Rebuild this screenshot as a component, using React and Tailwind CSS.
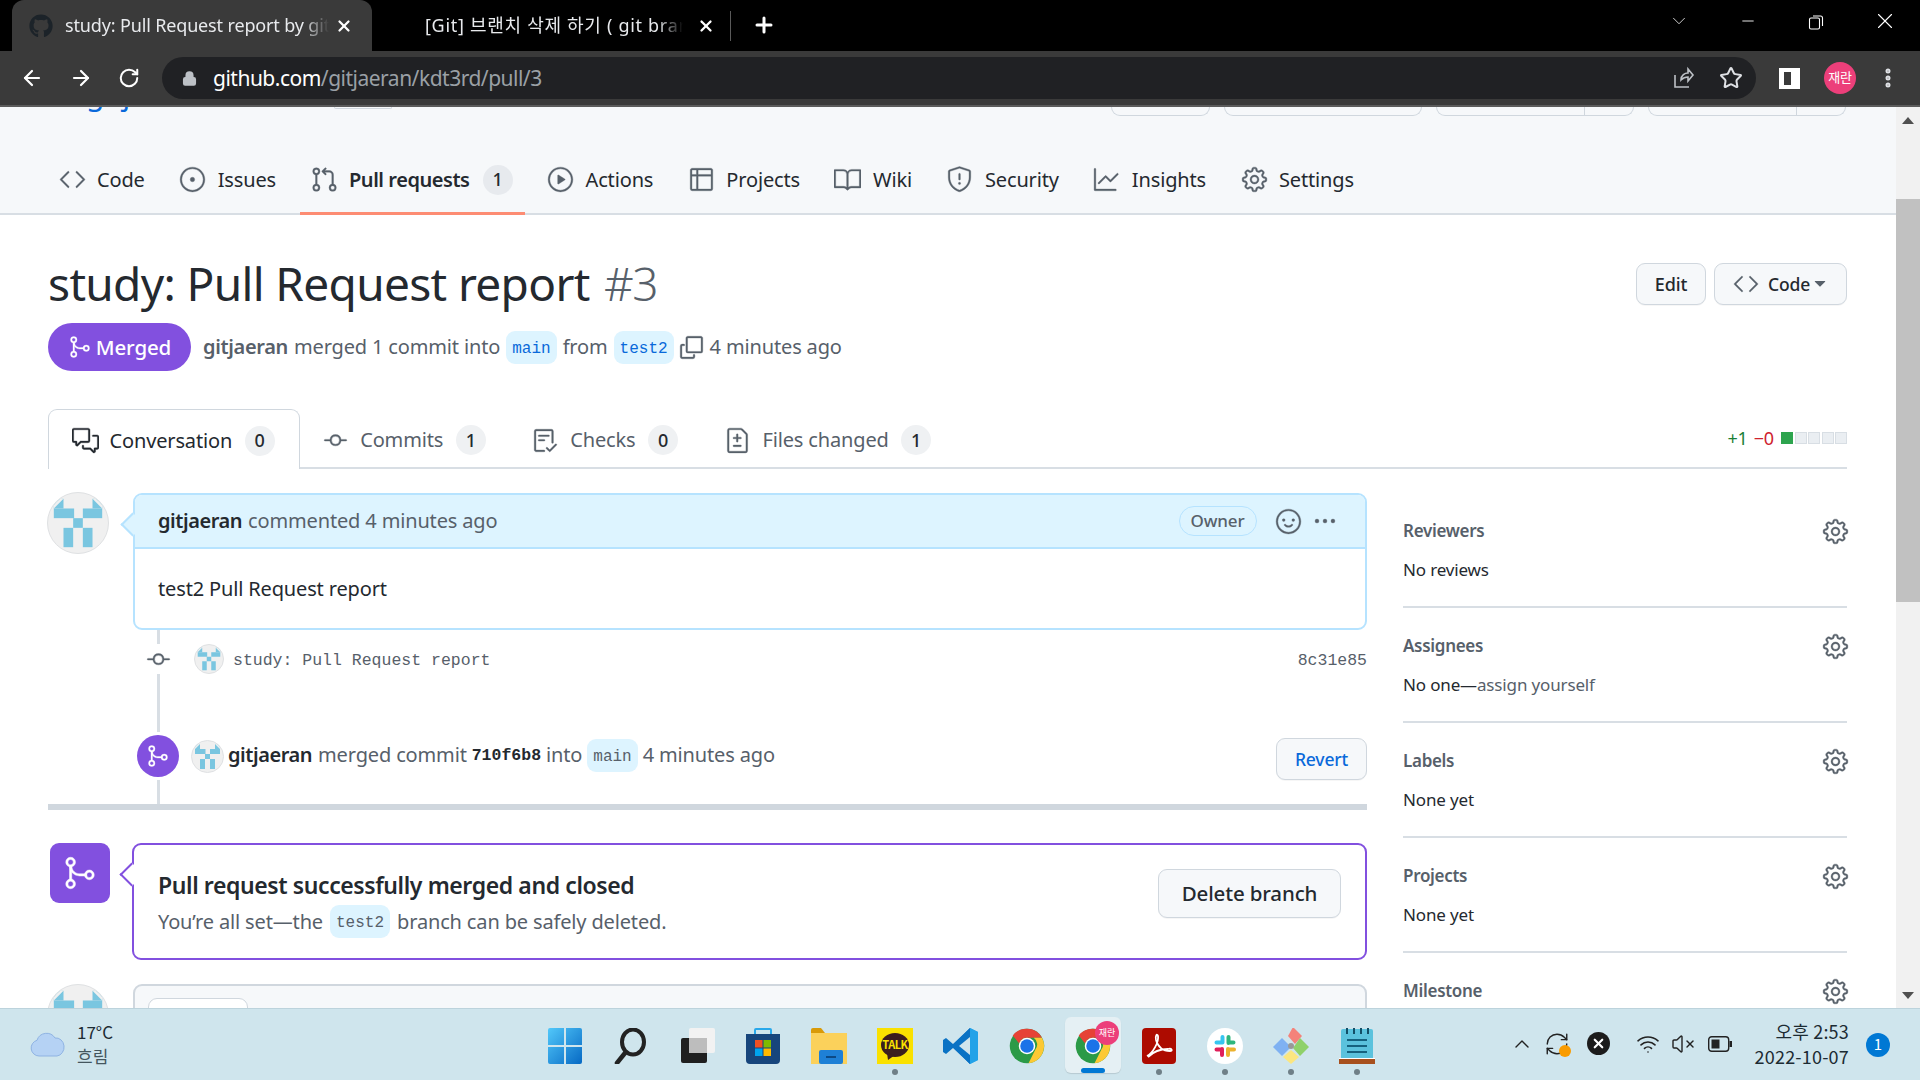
import React from "react";
import { GoCode, GoIssueOpened, GoGitPullRequest, GoPlay, GoTable, GoBook, GoShield, GoGraph, GoGear, GoGitMerge, GoCommentDiscussion, GoGitCommit, GoChecklist, GoFileDiff, GoCopy, GoSmiley, GoKebabHorizontal, GoTriangleDown } from "react-icons/go";
import { FaGithub } from "react-icons/fa";
import { ArrowLeft, ArrowRight, RotateCw, Star, X, Plus, ChevronDown, ChevronUp, Minus, MoreVertical, Lock, Wifi, VolumeX, RefreshCw } from "lucide-react";

function Oc({ icon: I, className = "" }) {
  return <I size={27} strokeWidth={0.3} className={`-m-[1.5px] shrink-0 ${className}`} />;
}

function Identicon({ size }) {
  return (
    <div className="shrink-0 rounded-full overflow-hidden border border-[#dfe1e3] bg-[#f0f0f0]" style={{ width: size, height: size }}>
      <svg viewBox="0 0 62 62" className="w-full h-full block">
        <g fill="#7ac6e0">
          <rect x="6" y="6" width="10" height="10" />
          <rect x="46" y="6" width="10" height="10" />
          <rect x="6" y="16" width="21" height="10" />
          <rect x="36" y="16" width="20" height="10" />
          <rect x="26" y="26" width="10" height="10" />
          <rect x="16" y="36" width="10" height="20" />
          <rect x="36" y="36" width="10" height="20" />
        </g>
        <path d="M16 6 L6 16 V6z M46 6 L56 16 V6z" fill="#f0f0f0" />
      </svg>
    </div>
  );
}

function NavItem({ icon, label, active, count }) {
  return (
    <div className={`h-[68px] flex items-center px-[12px] gap-[13px] -mb-[2px] border-b-[3px] ${active ? "border-[#fd8c73] font-semibold tracking-[-0.45px]" : "border-transparent"}`}>
      <Oc icon={icon} className="text-[#57606a]" />
      <span className="text-[#24292f] text-[20px]">{label}</span>
      {count && <span className="w-[30px] h-[30px] rounded-full bg-[#e7eaee] text-[18px] font-medium flex items-center justify-center text-[#24292f]">{count}</span>}
    </div>
  );
}

function PrTab({ icon, label, count, active }) {
  return (
    <div className={`h-[60px] flex items-center pt-[2px] px-[24px] gap-[12.5px] ${active ? "bg-white border border-b-0 border-[#d0d7de] rounded-t-[9px] -mb-[2px]" : ""}`}>
      <Oc icon={icon} className={active ? "text-[#24292f]" : "text-[#57606a]"} />
      <span className={`text-[20px] ${active ? "text-[#24292f]" : "text-[#57606a]"}`}>{label}</span>
      <span className="w-[30px] h-[30px] rounded-full bg-[#eff1f3] text-[18px] font-medium flex items-center justify-center text-[#24292f]">{count}</span>
    </div>
  );
}

function Code({ children, className = "" }) {
  return (
    <span className={`rounded-[9px] bg-[#ddf4ff] h-[33px] px-[6px] pt-[3px] flex items-center tracking-normal [font-family:'Liberation_Mono',monospace] text-[16px] ${className}`}>{children}</span>
  );
}

function SideSection({ title, children }) {
  return (
    <div className="h-[115px] border-b-2 border-[#d8dee4] pt-[25px] shrink-0">
      <div className="flex items-center justify-between h-[26px]">
        <span className="text-[17px] font-semibold text-[#57606a] tracking-[-0.3px]">{title}</span>
        <Oc icon={GoGear} className="text-[#57606a]" />
      </div>
      <div className="text-[17px] text-[#24292f] mt-[13px] h-[26px] flex items-center">{children}</div>
    </div>
  );
}

const Btn = ({ className = "", children }) => (
  <div className={`flex items-center justify-center rounded-[9px] border border-[#d0d7de] bg-[#f6f8fa] shadow-[0_1px_0_rgba(27,31,36,0.04)] font-medium text-[#24292f] ${className}`}>{children}</div>
);

function WinIcon() {
  return (
    <svg viewBox="0 0 36 36" width="36" height="36">
      <defs><linearGradient id="wg" x1="0" y1="0" x2="1" y2="1"><stop offset="0" stopColor="#52c8fa" /><stop offset="1" stopColor="#0669c4" /></linearGradient></defs>
      <path d="M1 2a2 2 0 0 1 2-2h14v17H1zM19 0h14a2 2 0 0 1 2 2v15H19zM1 19h16v17H3a2 2 0 0 1-2-2zM19 19h16v15a2 2 0 0 1-2 2H19z" fill="url(#wg)" />
    </svg>
  );
}
function SearchIcon() {
  return (
    <svg viewBox="0 0 36 36" width="36" height="36" fill="none">
      <ellipse cx="20" cy="14" rx="11" ry="12.5" stroke="#222" strokeWidth="4" />
      <path d="M12 25 4 35" stroke="#222" strokeWidth="4.5" strokeLinecap="round" />
    </svg>
  );
}
function TaskViewIcon() {
  return (
    <svg viewBox="0 0 36 36" width="36" height="36">
      <rect x="2" y="10" width="26" height="25" rx="2" fill="#1f1f1f" />
      <rect x="10" y="0" width="26" height="25" rx="2" fill="#f2f2f2" />
      <rect x="10" y="10" width="18" height="15" fill="#bdbdbd" />
    </svg>
  );
}
function StoreIcon() {
  return (
    <svg viewBox="0 0 36 36" width="36" height="36">
      <path d="M10 6V2a1 1 0 0 1 1-1h14a1 1 0 0 1 1 1v4" stroke="#29a8ea" strokeWidth="2" fill="none" />
      <path d="M1 6h34v26a4 4 0 0 1-4 4H5a4 4 0 0 1-4-4z" fill="#17457c" />
      <rect x="10" y="12" width="7.5" height="7.5" fill="#f25022" />
      <rect x="18.5" y="12" width="7.5" height="7.5" fill="#7fba00" />
      <rect x="10" y="20.5" width="7.5" height="7.5" fill="#00a4ef" />
      <rect x="18.5" y="20.5" width="7.5" height="7.5" fill="#ffb900" />
    </svg>
  );
}
function FolderIcon() {
  return (
    <svg viewBox="0 0 36 36" width="36" height="36">
      <path d="M0 2a2 2 0 0 1 2-2h8l4 5h-14z" fill="#d99a08" />
      <path d="M0 5h36v31H0z" fill="#fbd15b" />
      <rect x="8" y="22" width="24" height="14" rx="2" fill="#1e80d6" />
      <rect x="15" y="28" width="10" height="2" fill="#0c4a86" />
    </svg>
  );
}
function KakaoIcon() {
  return (
    <div className="w-[36px] h-[36px] bg-[#fae100] flex items-center justify-center relative">
      <svg viewBox="0 0 36 36" width="36" height="36" className="absolute inset-0">
        <ellipse cx="18" cy="17" rx="14" ry="12" fill="#3c1e1e" />
        <path d="M10 25l1 7 7-5z" fill="#3c1e1e" />
      </svg>
      <span className="relative text-[#fae100] text-[11px] font-bold -mt-[3px] tracking-[-0.5px]">TALK</span>
    </div>
  );
}
function VsIcon() {
  return (
    <svg viewBox="0 0 36 36" width="36" height="36">
      <path d="M27 0 35 4v28l-8 4-13-14 13-4z" fill="#23a2e8" />
      <path d="M27 0v36L10 20 3 26l-3-2v-12l3-2 7 6z" fill="#0a72c4" />
      <path d="M27 0 9 18l18 18z" fill="#0a72c4" />
      <path d="M27 9 16 18l11 9z" fill="#cfe4ec" />
      <path d="M35 4v28l-8 4V0z" fill="#23a2e8" />
    </svg>
  );
}
function ChromeIcon() {
  return (
    <svg viewBox="0 0 48 48" width="36" height="36">
      <circle cx="24" cy="24" r="23" fill="#2b9a47" />
      <path d="M24 1a23 23 0 0 1 20 12L24 13a11 11 0 0 0-10.5 7.5L5 10A23 23 0 0 1 24 1z" fill="#e64236" />
      <path d="M44 13a23 23 0 0 1-18 34l9-18a11 11 0 0 0-2-16z" fill="#fcc934" />
      <circle cx="24" cy="24" r="11" fill="#fff" />
      <circle cx="24" cy="24" r="9" fill="#1a73e8" />
    </svg>
  );
}
function AcrobatIcon() {
  return (
    <svg viewBox="0 0 36 36" width="36" height="36">
      <rect x="1" y="0" width="34" height="36" rx="4" fill="#ad0b00" />
      <path d="M6 28c6-3 12-14 11-20-1-3-3 0-2 4 2 7 6 11 14 11 3 0 2-3-2-2-7 0-15 3-20 8" stroke="#fff" strokeWidth="1.8" fill="none" />
    </svg>
  );
}
function SlackIcon() {
  return (
    <svg viewBox="0 0 36 36" width="36" height="36">
      <circle cx="18" cy="18" r="18" fill="#fff" />
      <g strokeWidth="4" strokeLinecap="round">
        <path d="M15.5 9v5.5M9.5 14.5h6" stroke="#36c5f0" />
        <path d="M21.5 9v6M21.5 14.5h5" stroke="#2eb67d" />
        <path d="M21 27v-6M21 21.5h6" stroke="#ecb22e" />
        <path d="M15 27v-6M9.5 21.5h5.5" stroke="#e01e5a" />
      </g>
    </svg>
  );
}
function GitIcon() {
  return (
    <svg viewBox="0 0 36 36" width="36" height="36">
      <path d="M18 0 27 9 20 17 13 9z" fill="#f4827a" transform="translate(2 -1)" />
      <path d="M9 10 18 19 9 28 0 19z" fill="#7fb1f2" />
      <path d="M27 10 36 19 27 28 20 20z" fill="#8fd16a" />
      <path d="M18 22 26 29 18 36 10 29z" fill="#fbe680" />
      <circle cx="18" cy="18" r="3" fill="#999" />
    </svg>
  );
}
function NoteIcon() {
  return (
    <svg viewBox="0 0 36 36" width="36" height="36">
      <rect x="2" y="1" width="32" height="31" rx="2" fill="#5bc2dd" />
      <path d="M0 31h36v5H0z" fill="#a7501e" />
      <path d="M0 30.5h36" stroke="#fff" strokeWidth="1.2" />
      <path d="M8 0v6M15 0v6M22 0v6M29 0v6" stroke="#134e66" strokeWidth="2" />
      <path d="M8 12h20M8 18h20M8 24h20" stroke="#15627f" strokeWidth="2.2" />
    </svg>
  );
}

function TbIcon({ children, dot, active }) {
  return (
    <div className={`w-[66px] h-[71px] flex flex-col items-center justify-start shrink-0 pt-[19px] relative`}>
      {active && <div className="absolute left-[5px] right-[5px] top-[8px] h-[56px] rounded-[6px] bg-[#e5f0f4] shadow-[0_1px_1px_rgba(0,0,0,0.12)]" />}
      <div className="relative">{children}</div>
      {dot && <div className="relative mt-[5px] w-[6px] h-[6px] rounded-full bg-[#6f7f87]" />}
      {active && <div className="relative mt-[4px] w-[24px] h-[5px] rounded-full bg-[#0078d4]" />}
    </div>
  );
}

export default function App() {
  return (
    <div className="w-[1920px] h-[1080px] overflow-hidden flex flex-col bg-white [font-family:'Noto_Sans','Noto_Sans_CJK_KR',sans-serif] tracking-[-0.15px]">
      {/* tabs */}
      <div className="h-[51px] bg-black flex items-end shrink-0 pl-[12px]">
        <div className="w-[360px] h-[51px] rounded-t-[12px] bg-[#3a3a3a] flex items-center pl-[17px] pr-[14px]">
          <FaGithub size={24} className="text-[#1c2329] shrink-0" />
          <span className="ml-[12px] text-[18px] text-[#e8eaed] w-[264px] whitespace-nowrap overflow-hidden [mask-image:linear-gradient(to_right,black_90%,transparent)]">study: Pull Request report by gitjaeran</span>
          <X size={18} strokeWidth={3} className="text-white ml-[6px] shrink-0" />
        </div>
        <div className="w-[358px] h-[51px] flex items-center pl-[53px] shrink-0">
          <span className="text-[18px] text-[#e8eaed] w-[258px] tracking-[0.7px] whitespace-nowrap overflow-hidden [mask-image:linear-gradient(to_right,black_90%,transparent)]">[Git] 브랜치 삭제 하기 ( git branch -d )</span>
          <X size={18} strokeWidth={3} className="text-white ml-[14px] shrink-0" />
        </div>
        <div className="w-px h-[30px] bg-[#5a5a5a] mb-[10px] shrink-0" />
        <Plus size={24} strokeWidth={3} className="text-white ml-[21px] mb-[14px] shrink-0" />
        <div className="flex-1" />
        <ChevronDown size={22} strokeWidth={1} className="text-[#ddd] mb-[19px] mr-[49px]" />
        <Minus size={18} strokeWidth={1.2} className="text-white mb-[21px] mr-[51px]" />
        <svg width="16" height="16" viewBox="0 0 16 16" fill="none" stroke="#fff" strokeWidth="1.1" className="mb-[21px] mr-[48px]"><rect x="1.5" y="4" width="10" height="11" rx="1.5" /><path d="M5 2h7.5a2 2 0 0 1 2 2v8" /></svg>
        <X size={26} strokeWidth={1} className="text-white mb-[17px] mr-[22px]" />
      </div>
      {/* toolbar */}
      <div className="h-[56px] bg-[#3a3a3a] border-b-2 border-[#5b5b5b] flex items-center shrink-0">
        <ArrowLeft size={24} strokeWidth={2.2} className="text-white ml-[20px]" />
        <ArrowRight size={24} strokeWidth={2.2} className="text-white ml-[25px]" />
        <RotateCw size={22} strokeWidth={2.2} className="text-white ml-[25px]" />
        <div className="ml-[22px] w-[1594px] h-[42px] rounded-full bg-[#202124] flex items-center pl-[20px] pr-[13px]">
          <Lock size={15} strokeWidth={3} className="text-[#bdc1c6] fill-[#bdc1c6]" />
          <span className="ml-[16px] pt-[1px] text-[21px] tracking-[-0.5px] text-white">github.com<span className="text-[#9aa0a6]">/gitjaeran/kdt3rd/pull/3</span></span>
          <div className="flex-1" />
          <svg width="24" height="24" viewBox="0 0 24 24" fill="none" stroke="#bdc1c6" strokeWidth="1.6"><path d="M4 9v12h14M10 14c0-5 4-7 7-7V3l5 6-5 6v-4c-3 0-5 1-7 3z" /></svg>
          <Star size={24} strokeWidth={2} className="text-[#dfe1e5] ml-[24px]" />
        </div>
        <div className="ml-[23px] w-[21px] h-[21px] border-[4px] border-x-[5px] border-r-[9px] border-white shrink-0" />
        <div className="ml-[24px] w-[32px] h-[32px] rounded-full bg-[#ec3f7a] text-white text-[13px] flex items-center justify-center shrink-0">재란</div>
        <MoreVertical size={24} strokeWidth={3} className="text-[#dfe1e5] ml-[20px] shrink-0" />
      </div>
      {/* page */}
      <div className="flex-1 flex overflow-hidden min-h-0">
        <div className="w-[1896px] shrink-0 flex flex-col overflow-hidden">
          <div className="bg-[#f6f8fa] border-b-[2px] border-[#d8dee4] h-[108px] shrink-0 flex flex-col">
            <div className="h-[9px] pl-[86px] pr-[50px] flex justify-between overflow-hidden shrink-0">
              <div className="flex items-start">
                <div className="w-[248px] h-[9px] overflow-hidden">
                  <div className="-mt-[28px] text-[30px] leading-[30px] text-[#0969da] whitespace-nowrap">gitjaeran <span className="text-[#57606a]">/</span> kdt3rd</div>
                </div>
                <span className="w-[58px] h-[2px] border border-t-0 border-[#d0d7de] rounded-b-[9px]" />
              </div>
              <div className="flex gap-[14px]">
                <div className="w-[99px] border border-t-0 border-[#d0d7de] rounded-b-[9px]" />
                <div className="w-[198px] border border-t-0 border-[#d0d7de] rounded-b-[9px]" />
                <div className="w-[198px] border border-t-0 border-[#d0d7de] rounded-b-[9px] flex justify-end"><div className="w-[49px] border-l border-[#d0d7de]" /></div>
                <div className="w-[198px] border border-t-0 border-[#d0d7de] rounded-b-[9px] flex justify-end"><div className="w-[49px] border-l border-[#d0d7de]" /></div>
              </div>
            </div>
            <div className="mt-auto flex px-[48px] gap-[12px]">
              <NavItem icon={GoCode} label="Code" />
              <NavItem icon={GoIssueOpened} label="Issues" />
              <NavItem icon={GoGitPullRequest} label="Pull requests" active count="1" />
              <NavItem icon={GoPlay} label="Actions" />
              <NavItem icon={GoTable} label="Projects" />
              <NavItem icon={GoBook} label="Wiki" />
              <NavItem icon={GoShield} label="Security" />
              <NavItem icon={GoGraph} label="Insights" />
              <NavItem icon={GoGear} label="Settings" />
            </div>
          </div>
          <div className="pl-[48px] pr-[49px]">
            <div className="mt-[32px] h-[72px] flex justify-between items-start">
              <h1 className="text-[46px] leading-[72px] text-[#24292f] font-normal tracking-[-0.65px] whitespace-nowrap">study: Pull Request report <span className="ml-[3px] text-[#57606a] font-light tracking-[-1.5px]">#3</span></h1>
              <div className="flex gap-[8px] mt-[16px]">
                <Btn className="w-[70px] h-[42px] text-[18px]">Edit</Btn>
                <Btn className="w-[133px] h-[42px] text-[17.5px] gap-[9px]"><GoCode size={26} strokeWidth={0.3} className="text-[#57606a]" /><span className="flex items-center">Code<GoTriangleDown size={20} className="text-[#57606a] -mr-[2px]" /></span></Btn>
              </div>
            </div>
            <div className="mt-[4px] h-[48px] flex items-center text-[20px] text-[#57606a] whitespace-nowrap">
              <div className="w-[143px] h-[48px] rounded-full bg-[#8250df] text-white text-[20.5px] font-medium flex items-center justify-center gap-[4px]"><GoGitMerge size={24} strokeWidth={0.3} />Merged</div>
              <span className="ml-[12px] font-semibold tracking-[-0.35px]">gitjaeran</span>
              <span className="ml-[6px]">merged 1 commit into</span>
              <Code className="ml-[6px] text-[#0969da]">main</Code>
              <span className="ml-[6px]">from</span>
              <Code className="ml-[6px] text-[#0969da]">test2</Code>
              <GoCopy size={27} strokeWidth={0.3} className="ml-[4px] shrink-0" />
              <span className="ml-[5px]">4 minutes ago</span>
            </div>
            <div className="mt-[38px] h-[60px] border-b-2 border-[#d8dee4] flex items-start">
              <PrTab icon={GoCommentDiscussion} label="Conversation" count="0" active />
              <PrTab icon={GoGitCommit} label="Commits" count="1" />
              <PrTab icon={GoChecklist} label="Checks" count="0" />
              <PrTab icon={GoFileDiff} label="Files changed" count="1" />
              <div className="ml-auto h-[58px] flex items-center gap-[6px] text-[18px]">
                <span className="text-[#1a7f37]">+1</span>
                <span className="text-[#cf222e]">−0</span>
                <div className="flex gap-[1.5px] ml-[1px]">
                  <div className="w-[12px] h-[12px] bg-[#2da44e]" />
                  <div className="w-[12px] h-[12px] bg-[#eaeef2] border border-[#d8dee4]" />
                  <div className="w-[12px] h-[12px] bg-[#eaeef2] border border-[#d8dee4]" />
                  <div className="w-[12px] h-[12px] bg-[#eaeef2] border border-[#d8dee4]" />
                  <div className="w-[12px] h-[12px] bg-[#eaeef2] border border-[#d8dee4]" />
                </div>
              </div>
            </div>
            <div className="mt-[24px] flex gap-[36px] items-start">
              <div className="w-[1319px] shrink-0 flex flex-col">
                {/* comment */}
                <div className="flex">
                  <div className="-ml-[1px] -mt-[1px]"><Identicon size={62} /></div>
                  <div className="ml-[24px] w-[1234px] relative border-2 border-[#b6e3ff] rounded-[9px]">
                    <div className="absolute -left-[11px] top-[21px] w-[17px] h-[17px] rotate-45 bg-[#ddf4ff] border-l-2 border-b-2 border-[#b6e3ff]" />
                    <div className="relative h-[54px] bg-[#ddf4ff] rounded-t-[7px] border-b-2 border-[#b6e3ff] flex items-center pl-[23px] pr-[26px] text-[20px] text-[#57606a]">
                      <span className="font-semibold text-[#24292f] tracking-[-0.45px]">gitjaeran</span>
                      <span className="ml-[6px]">commented 4 minutes ago</span>
                      <span className="ml-auto h-[30px] px-[11px] rounded-full border border-[#b6e3ff] text-[17px] flex items-center font-medium">Owner</span>
                      <Oc icon={GoSmiley} className="ml-[18px]" />
                      <GoKebabHorizontal size={24} strokeWidth={0.3} className="ml-[13px] mr-[2px]" />
                    </div>
                    <div className="h-[79px] flex items-center pl-[23px] text-[20px] text-[#24292f]">test2 Pull Request report</div>
                  </div>
                </div>
                {/* timeline */}
                <div className="ml-[109px] h-[174px] border-l-[3px] border-[#d8dee4] flex flex-col">
                  <div className="h-[58px] flex items-center shrink-0">
                    <div className="-ml-[16px] w-[28px] h-[30px] bg-white flex items-center justify-center"><Oc icon={GoGitCommit} className="text-[#57606a]" /></div>
                    <div className="ml-[22px]"><Identicon size={30} /></div>
                    <span className="ml-[9px] pt-[4px] [font-family:'Liberation_Mono',monospace] text-[16.5px] text-[#57606a] tracking-normal">study: Pull Request report</span>
                    <span className="ml-auto pt-[4px] [font-family:'Liberation_Mono',monospace] text-[16.5px] text-[#57606a] tracking-normal">8c31e85</span>
                  </div>
                  <div className="mt-[44px] h-[48px] flex items-center text-[20px] text-[#57606a] whitespace-nowrap">
                    <div className="-ml-[26px] w-[48px] h-[48px] bg-white flex items-center justify-center shrink-0"><div className="w-[42px] h-[42px] rounded-full bg-[#8250df] text-white flex items-center justify-center"><GoGitMerge size={24} strokeWidth={0.3} /></div></div>
                    <div className="ml-[9px]"><Identicon size={33} /></div>
                    <div className="flex items-center pb-[2px]">
                      <span className="ml-[4px] font-semibold text-[#24292f] tracking-[-0.45px]">gitjaeran</span>
                      <span className="ml-[6px]">merged commit</span>
                      <span className="ml-[5px] pt-[2px] [font-family:'Liberation_Mono',monospace] text-[16.5px] font-bold text-[#24292f] tracking-normal">710f6b8</span>
                      <span className="ml-[5px]">into</span>
                      <Code className="ml-[5px] text-[#57606a]">main</Code>
                      <span className="ml-[5px]">4 minutes ago</span>
                    </div>
                    <Btn className="ml-auto mt-[6px] w-[91px] h-[42px] text-[17.5px] !text-[#0969da]">Revert</Btn>
                  </div>
                </div>
                <div className="h-[6px] bg-[#d0d7de] shrink-0" />
                {/* merge box */}
                <div className="mt-[33px] flex">
                  <div className="ml-[2px] w-[60px] h-[60px] rounded-[9px] bg-[#8250df] text-white flex items-center justify-center shrink-0"><GoGitMerge size={36} strokeWidth={0.3} /></div>
                  <div className="ml-[22px] w-[1235px] h-[117px] border-2 border-[#8250df] rounded-[9px] relative flex items-start justify-between pl-[24px] pr-[24px]">
                    <div className="absolute -left-[11px] top-[21px] w-[17px] h-[17px] rotate-45 bg-white border-l-2 border-b-2 border-[#8250df]" />
                    <div className="relative pt-[22px]">
                      <div className="text-[23px] leading-[36px] font-semibold text-[#24292f] tracking-[-0.4px]">Pull request successfully merged and closed</div>
                      <div className="mt-[2px] flex items-center text-[20px] text-[#57606a] whitespace-nowrap">You’re all set—the<Code className="mx-[7px]">test2</Code>branch can be safely deleted.</div>
                    </div>
                    <Btn className="mt-[24px] w-[183px] h-[49px] text-[20.5px]">Delete branch</Btn>
                  </div>
                </div>
                {/* next box */}
                <div className="mt-[24px] flex">
                  <div className="-ml-[1px]"><Identicon size={62} /></div>
                  <div className="ml-[24px] w-[1234px] h-[100px] bg-[#f6f8fa] border-2 border-[#d0d7de] rounded-t-[9px] pl-[13px] pt-[12px]">
                    <div className="w-[100px] h-[40px] bg-white border border-[#d0d7de] rounded-t-[9px]" />
                  </div>
                </div>
              </div>
              <div className="flex-1 flex flex-col">
                <SideSection title="Reviewers">No reviews</SideSection>
                <SideSection title="Assignees"><span>No one—<span className="text-[#57606a]">assign yourself</span></span></SideSection>
                <SideSection title="Labels">None yet</SideSection>
                <SideSection title="Projects">None yet</SideSection>
                <SideSection title="Milestone">No milestone</SideSection>
              </div>
            </div>
          </div>
        </div>
        {/* scrollbar */}
        <div className="w-[24px] bg-[#f1f1f1] flex flex-col items-center">
          <div className="h-[26px] flex items-center justify-center shrink-0"><div className="w-0 h-0 border-x-[6px] border-x-transparent border-b-[7px] border-b-[#505050]" /></div>
          <div className="mt-[66px] w-full h-[403px] bg-[#c1c1c1] shrink-0" />
          <div className="mt-auto h-[26px] flex items-center justify-center shrink-0"><div className="w-0 h-0 border-x-[6px] border-x-transparent border-t-[7px] border-t-[#505050]" /></div>
        </div>
      </div>
      {/* taskbar */}
      <div className="h-[72px] shrink-0 bg-[#cfe5ed] flex items-center border-t border-[#bcd3dc] [font-family:'Noto_Sans_CJK_KR','Noto_Sans',sans-serif] tracking-normal">
        <div className="w-[532px] shrink-0 flex items-center pl-[30px] pb-[2px]">
          <svg width="36" height="26" viewBox="0 0 36 26"><path d="M9 25a8 8 0 0 1-2-15.7A10 10 0 0 1 25 7a8 9 0 0 1 2 18z" fill="#b5d2f4" stroke="#8fb3e3" /></svg>
          <div className="ml-[11px] flex flex-col items-start text-[17px] leading-[24px] text-[#1c2b33]"><span>17°C</span><span className="text-[#44565e]">흐림</span></div>
        </div>
        <div className="flex shrink-0">
          <TbIcon><WinIcon /></TbIcon>
          <TbIcon><SearchIcon /></TbIcon>
          <TbIcon><TaskViewIcon /></TbIcon>
          <TbIcon><StoreIcon /></TbIcon>
          <TbIcon><FolderIcon /></TbIcon>
          <TbIcon dot><KakaoIcon /></TbIcon>
          <TbIcon><VsIcon /></TbIcon>
          <TbIcon><ChromeIcon /></TbIcon>
          <TbIcon active>
            <ChromeIcon />
            <div className="absolute -top-[7px] -right-[8px] w-[24px] h-[24px] rounded-full bg-[#ec3f7a] text-white text-[9px] flex items-center justify-center">재란</div>
          </TbIcon>
          <TbIcon dot><AcrobatIcon /></TbIcon>
          <TbIcon dot><SlackIcon /></TbIcon>
          <TbIcon dot><GitIcon /></TbIcon>
          <TbIcon dot><NoteIcon /></TbIcon>
        </div>
        <div className="ml-[120px] flex items-center shrink-0 pb-[2px]">
          <ChevronUp size={24} strokeWidth={1.4} className="text-[#222]" />
          <div className="ml-[10px] relative w-[26px] h-[26px]">
            <RefreshCw size={26} strokeWidth={1.3} className="text-[#222]" />
            <div className="absolute right-[-1px] bottom-[0px] w-[12px] h-[12px] rounded-full bg-[#f99b00]" />
          </div>
          <div className="ml-[17px] w-[23px] h-[23px] rounded-full bg-[#1c1c1c] flex items-center justify-center"><X size={15} strokeWidth={3.5} className="text-white" /></div>
          <Wifi size={24} strokeWidth={1.6} className="ml-[26px] text-[#222]" />
          <VolumeX size={24} strokeWidth={1.4} className="ml-[11px] text-[#222]" />
          <svg width="24" height="16" viewBox="0 0 24 16" fill="none" className="ml-[13px]"><rect x="0.7" y="0.7" width="20" height="14.6" rx="3" stroke="#222" strokeWidth="1.4" /><rect x="3.5" y="3.5" width="8" height="9" fill="#222" /><rect x="21.5" y="5" width="2.5" height="6" fill="#222" /></svg>
        </div>
        <div className="w-[117px] shrink-0 flex flex-col items-end text-[18px] leading-[25px] text-[#1c2b33] tracking-[0.2px] pb-[2px]">
          <span>오후 2:53</span>
          <span>2022-10-07</span>
        </div>
        <div className="ml-[17px] w-[24px] h-[24px] rounded-full bg-[#0078d4] text-white text-[15px] flex items-center justify-center shrink-0">1</div>
      </div>
    </div>
  );
}
